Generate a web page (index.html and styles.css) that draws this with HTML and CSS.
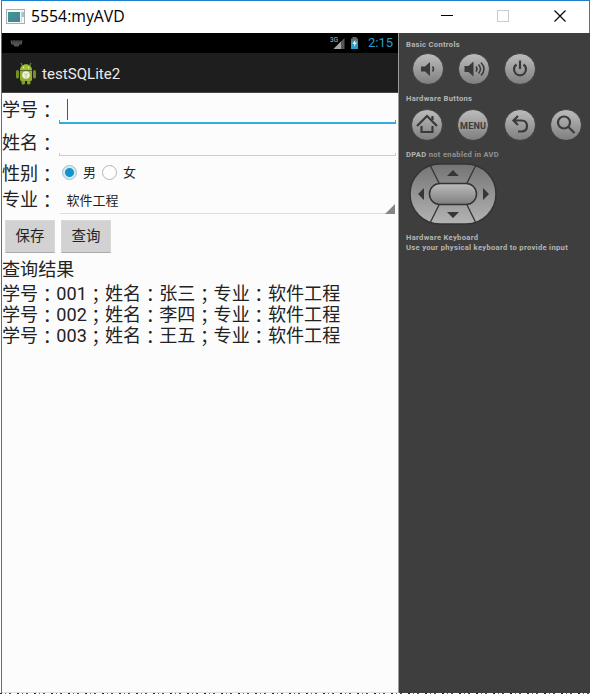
FILE: index.html
```html
<!DOCTYPE html>
<html lang="zh-CN">
<head>
<meta charset="utf-8">
<title>5554:myAVD</title>
<link rel="stylesheet" href="styles.css">
</head>
<body>
<svg class="defs" width="0" height="0">
  <defs>
    <linearGradient id="metal" x1="0" y1="0" x2="0" y2="1"><stop offset="0" stop-color="#bdbdbd"/><stop offset="1" stop-color="#7e7e7e"/></linearGradient>
    <linearGradient id="pad" x1="0" y1="0" x2="0" y2="1"><stop offset="0" stop-color="#747474"/><stop offset="1" stop-color="#b4b4b4"/></linearGradient>
    <linearGradient id="thumb" x1="0" y1="0" x2="1" y2="1"><stop offset="0" stop-color="#3c9c90"/><stop offset="1" stop-color="#4a7c9c"/></linearGradient>
  </defs>
</svg>
<div class="window">
  <header class="titlebar">
    <svg class="app-icon" width="20" height="16" viewBox="0 0 20 16"><rect x=".5" y=".5" width="18" height="14" fill="#f4f6f7" stroke="#a9aeb1"/><rect x="2" y="3" width="12" height="10" fill="url(#thumb)"/><path d="M15.5 3v10" stroke="#c9d2d6"/><path d="M17 3v5" stroke="#3c9c90"/></svg>
    <h1 class="title">5554:myAVD</h1>
    <svg class="window-buttons" width="128" height="14" viewBox="0 0 128 14" fill="none"><path d="M0 6.5h12" stroke="#000"/><rect x="56.500" y="1.500" width="11" height="11" stroke="#ccc"/><path d="M113.500 1.500l11 11M124.500 1.500l-11 11" stroke="#000" stroke-width="1.100"/></svg>
  </header>
  <div class="body">
    <main class="phone">
      <div class="status">
        <svg width="14" height="8" viewBox="0 0 14 8"><path d="M.5.5h12l-.8 4H9.500L8.500 6.500h-4l-1-2H1.300z" fill="#585858"/><path d="M2 1.500h9M2 3h9" stroke="#222" stroke-width=".6" stroke-dasharray="1 .6"/></svg>
        <div class="status-right">
          <svg width="16" height="14" viewBox="0 0 16 14"><text x="0" y="6" class="net">3G</text><path d="M3.500 13L14.500 2v11z" fill="#555"/><path d="M3.500 13L11 5.500V13z" fill="#a5a5a5"/></svg>
          <svg class="battery" width="9" height="14" viewBox="0 0 9 14"><path d="M2.500 1h4v1.500H8V13H1V2.500h1.500z" fill="#626a6d"/><path d="M1 5h7v8H1z" fill="#2b9fc9"/><path d="M5.500 3.500L2.500 8h2l-.7 3L6.800 6.500h-2z" fill="#eef9fc"/></svg>
          <span class="clock">2:15</span>
        </div>
      </div>
      <div class="actionbar">
        <svg width="20" height="23" viewBox="0 0 20 23"><path d="M6.500 4L5 1M13.500 4L15 1" stroke="#7f9c2b" stroke-width="1"/><path d="M4 8.500C4 0 16 0 16 8.500z" fill="#a0bd38"/><circle cx="7.500" cy="5.500" r=".7" fill="#eef"/><circle cx="12.500" cy="5.500" r=".7" fill="#eef"/><rect x="0" y="8" width="3" height="8.500" rx="1.500" fill="#748f25"/><rect x="17" y="8" width="3" height="8.500" rx="1.500" fill="#748f25"/><rect x="5.500" y="16" width="3.500" height="6.500" rx="1.500" fill="#819e2c"/><rect x="11" y="16" width="3.500" height="6.500" rx="1.500" fill="#819e2c"/><path d="M4 9h12v8.500q0 1.500-1.500 1.500h-9Q4 19 4 17.500z" fill="#91b02f"/><circle cx="10" cy="13" r="3.800" fill="#eef2dd"/><path d="M10 13.500V16M10 13L8 11.500M10 13l2-1.500" stroke="#b9c68c" stroke-width="1"/></svg>
        <span>testSQLite2</span>
      </div>
      <div class="form">
        <div class="row row-id"><label>学号<i>：</i></label><div class="field active"><span class="caret"></span></div></div>
        <div class="row row-name"><label>姓名<i>：</i></label><div class="field"></div></div>
        <div class="row row-sex"><label>性别<i>：</i></label><div class="radios"><span class="radio on"></span><span class="option first">男</span><span class="radio"></span><span class="option">女</span></div></div>
        <div class="row row-major"><label>专业<i>：</i></label><div class="spinner">软件工程<svg width="10" height="10" viewBox="0 0 10 10"><path d="M10 0v10H0z" fill="#858585"/></svg></div></div>
        <div class="actions"><button>保存</button><button>查询</button></div>
        <div class="result-title">查询结果</div>
        <div class="results">
          <p>学号<i>：</i>001<i>；</i>姓名<i>：</i>张三<i>；</i>专业<i>：</i>软件工程</p>
          <p>学号<i>：</i>002<i>；</i>姓名<i>：</i>李四<i>；</i>专业<i>：</i>软件工程</p>
          <p>学号<i>：</i>003<i>；</i>姓名<i>：</i>王五<i>；</i>专业<i>：</i>软件工程</p>
        </div>
      </div>
    </main>
    <aside class="controls">
      <h2>Basic Controls</h2>
      <div class="keys basic">
        <svg viewBox="0 0 32 32"><circle class="disc" cx="16" cy="16" r="15.500"/><path class="ink" d="M9 13.500h4l5-4.500v14l-5-4.500H9z"/><path class="line" d="M20.500 13.500q2 2.500 0 5"/></svg>
        <svg viewBox="0 0 32 32"><circle class="disc" cx="16" cy="16" r="15.500"/><path class="ink" d="M6.500 13h4l5-4.500v15l-5-4.500h-4z"/><path class="line" d="M18 13.500q2 2.500 0 5M20.500 11.500q4 4.500 0 9M23 9.500q6 6.500 0 13"/></svg>
        <svg viewBox="0 0 32 32"><circle class="disc" cx="16" cy="16" r="15.500"/><path class="line thick" d="M12.500 11.500a6 6 0 1 0 7 0M16 7.500v8.500"/></svg>
      </div>
      <h2>Hardware Buttons</h2>
      <div class="keys hardware">
        <svg viewBox="0 0 32 32"><circle class="disc" cx="16" cy="16" r="15.500"/><path class="line thick" d="M6 17L16 7l10 10M21.500 11V7M10.500 17v6H14M21.500 17v6H14"/></svg>
        <svg viewBox="0 0 32 32"><circle class="disc" cx="16" cy="16" r="15.500"/><text class="menu" x="16" y="20" text-anchor="middle" textLength="26">MENU</text></svg>
        <svg viewBox="0 0 32 32"><circle class="disc" cx="16" cy="16" r="15.500"/><path class="line thick" d="M14 7l-4.500 4.500L14 16M10 11.500h7.500q5.500 0 5.500 5.500t-5.500 5.500H14"/></svg>
        <svg viewBox="0 0 32 32"><circle class="disc" cx="16" cy="16" r="15.500"/><circle class="line thick" cx="14" cy="13.500" r="6"/><path class="line thick" d="M18.500 18l6 6"/></svg>
      </div>
      <h2 class="dpad-title">DPAD <span>not enabled in AVD</span></h2>
      <svg class="dpad" width="88" height="62" viewBox="0 0 88 62">
        <rect x="1" y="1" width="86" height="60" rx="30" fill="url(#pad)" stroke="#343434" stroke-width="1.500"/>
        <path d="M21 2l9 18M67 2l-9 18M30 42l-9 18M58 42l9 18" stroke="#383838" stroke-width="1.400"/>
        <rect x="20.500" y="20.500" width="47" height="21" rx="10.500" fill="url(#metal)" stroke="#333" stroke-width="1.500"/>
        <path d="M44 7l6 6H38zM44 55l6-6H38zM9 31l6-6v12zM80 31l-6-6v12z" fill="#363636"/>
      </svg>
      <div class="keyboard"><p>Hardware Keyboard</p><p>Use your physical keyboard to provide input</p></div>
    </aside>
  </div>
</div>
<div class="behind"></div>
</body>
</html>
```
FILE: styles.css
```css
* { box-sizing: border-box; }
body { margin: 0; width: 591px; height: 694px; overflow: hidden; background: #fff; font-family: Roboto, "Noto Sans CJK SC", sans-serif; }
.defs { position: absolute; }
p, h1, h2 { margin: 0; }
.window { width: 589px; height: 693px; margin-left: 1px; border: solid #1e7fcc; border-width: 1px 0 0 1px; }
.titlebar { height: 32px; display: flex; align-items: center; padding-left: 4px; border-right: 1px solid #1e7fcc; }
.app-icon { margin-top: -1px; }
.title { margin-left: 5px; margin-top: -2px; font: 15.8px/20px "Open Sans", sans-serif; color: #000; width: 110px; }
.window-buttons { margin-left: auto; margin-right: 20px; margin-top: -2px; }
.body { display: flex; height: 660px; }
.phone { width: 397px; background: #fcfcfc; border-right: 1px solid #999; border-bottom: 1px solid #ddd; }
.status { height: 20px; background: #000; display: flex; align-items: center; justify-content: space-between; padding: 0 5px 0 8px; }
.status > svg { margin-top: 2px; }
.status-right { display: flex; align-items: center; }
.battery { margin-left: 4px; }
.net { font: 6.5px Roboto, sans-serif; fill: #bbb; }
.clock { margin-left: 9px; font-size: 13px; line-height: 20px; color: #2a9dc6; }
.actionbar { height: 40px; background: #1e1e1e; display: flex; align-items: center; padding: 2px 0 0 14px; gap: 6px; color: #ebebeb; font-size: 15.1px; border-bottom: 1px solid #444; }
.form { color: #222; font-size: 18.1px; }
.row { display: flex; }
label { width: 56px; flex: none; padding-top: 1px; white-space: nowrap; }
i { display: inline-block; line-height: 0; vertical-align: -2px; font-family: "Noto Sans CJK TC", sans-serif; font-style: normal; font-feature-settings: "locl" 0; }
.row-id { height: 32px; line-height: 31px; }
.row-name { height: 33px; line-height: 33px; }
.row-sex { height: 30px; line-height: 29px; }
.row-major { height: 28px; line-height: 21px; }
.field { width: 337px; margin-left: 1px; height: 3px; align-self: flex-end; margin-bottom: 2px; border: 1px solid #ccc; border-top: 0; }
.field.active { height: 30px; margin-bottom: 1px; border: 0; padding: 5px 0 0 8px; background: linear-gradient(#35addb, #35addb) 0 100% / 100% 2px no-repeat, linear-gradient(#35addb, #35addb) 0 100% / 1px 4px no-repeat, linear-gradient(#35addb, #35addb) 100% 100% / 1px 4px no-repeat; }
.caret { display: block; width: 1px; height: 21px; background: #555; }
.radios { display: flex; align-items: center; padding-left: 4px; font-size: 13px; height: 29px; }
.radio { width: 15px; height: 15px; border: 1px solid #b5b5b5; border-radius: 50%; background: #fdfdfd; }
.radio.on { border-color: #a3bdc9; background: radial-gradient(circle, #0b96cd 0 4px, #d8e8ee 5px); }
.option { margin-left: 6px; }
.option.first { width: 19px; }
.spinner { position: relative; margin-left: 2px; width: 335px; height: 26px; padding-left: 6.5px; line-height: 25px; font-size: 13px; border-bottom: 1px solid #ddd; }
.spinner svg { position: absolute; right: 0; bottom: -1px; }
.actions { display: flex; gap: 6px; padding: 4px 0 0 3px; }
button { width: 50px; height: 33px; padding: 0; border: 1px solid #d8d8d8; border-bottom-color: #aaa; background: #d2d2d2; color: #222; font: 14.4px/30px Roboto, "Noto Sans CJK SC", sans-serif; }
.result-title { height: 31px; line-height: 33px; }
.results { line-height: 20.8px; }
.results p { height: 20.8px; white-space: nowrap; }
.controls { flex: 1; background: #3e3e3e; padding: 7px 0 0 7px; color: #b5b5b5; font-size: 7.6px; letter-spacing: .31px; line-height: 10px; font-weight: bold; }
.controls h2 { font-size: inherit; line-height: 10px; font-weight: bold; }
.keys { display: flex; letter-spacing: 0; }
.keys svg { width: 32px; height: 32px; }
.basic { gap: 14px; margin: 3px 0 9px 6px; }
.hardware { gap: 14.3px; margin: 5px 0 9px 5px; }
.disc { fill: url(#metal); stroke: #343434; stroke-width: .8; }
.ink { fill: #3a3a3a; }
.line { fill: none; stroke: #3a3a3a; stroke-width: 1.5; }
.thick { stroke-width: 2.2; }
.menu { font: bold 9px Roboto, sans-serif; fill: #3a3a3a; }
.dpad-title span { color: #929292; }
.dpad { display: block; margin: 3px 0 8px 3px; }
.keyboard { line-height: 9.5px; white-space: nowrap; }
.behind { height: 1px; background: repeating-linear-gradient(90deg, #222 0 2px, #fff 2px 5px, #667 5px 6px, #fff 6px 9px, #543 9px 11px, #fff 11px 17px); }
```
